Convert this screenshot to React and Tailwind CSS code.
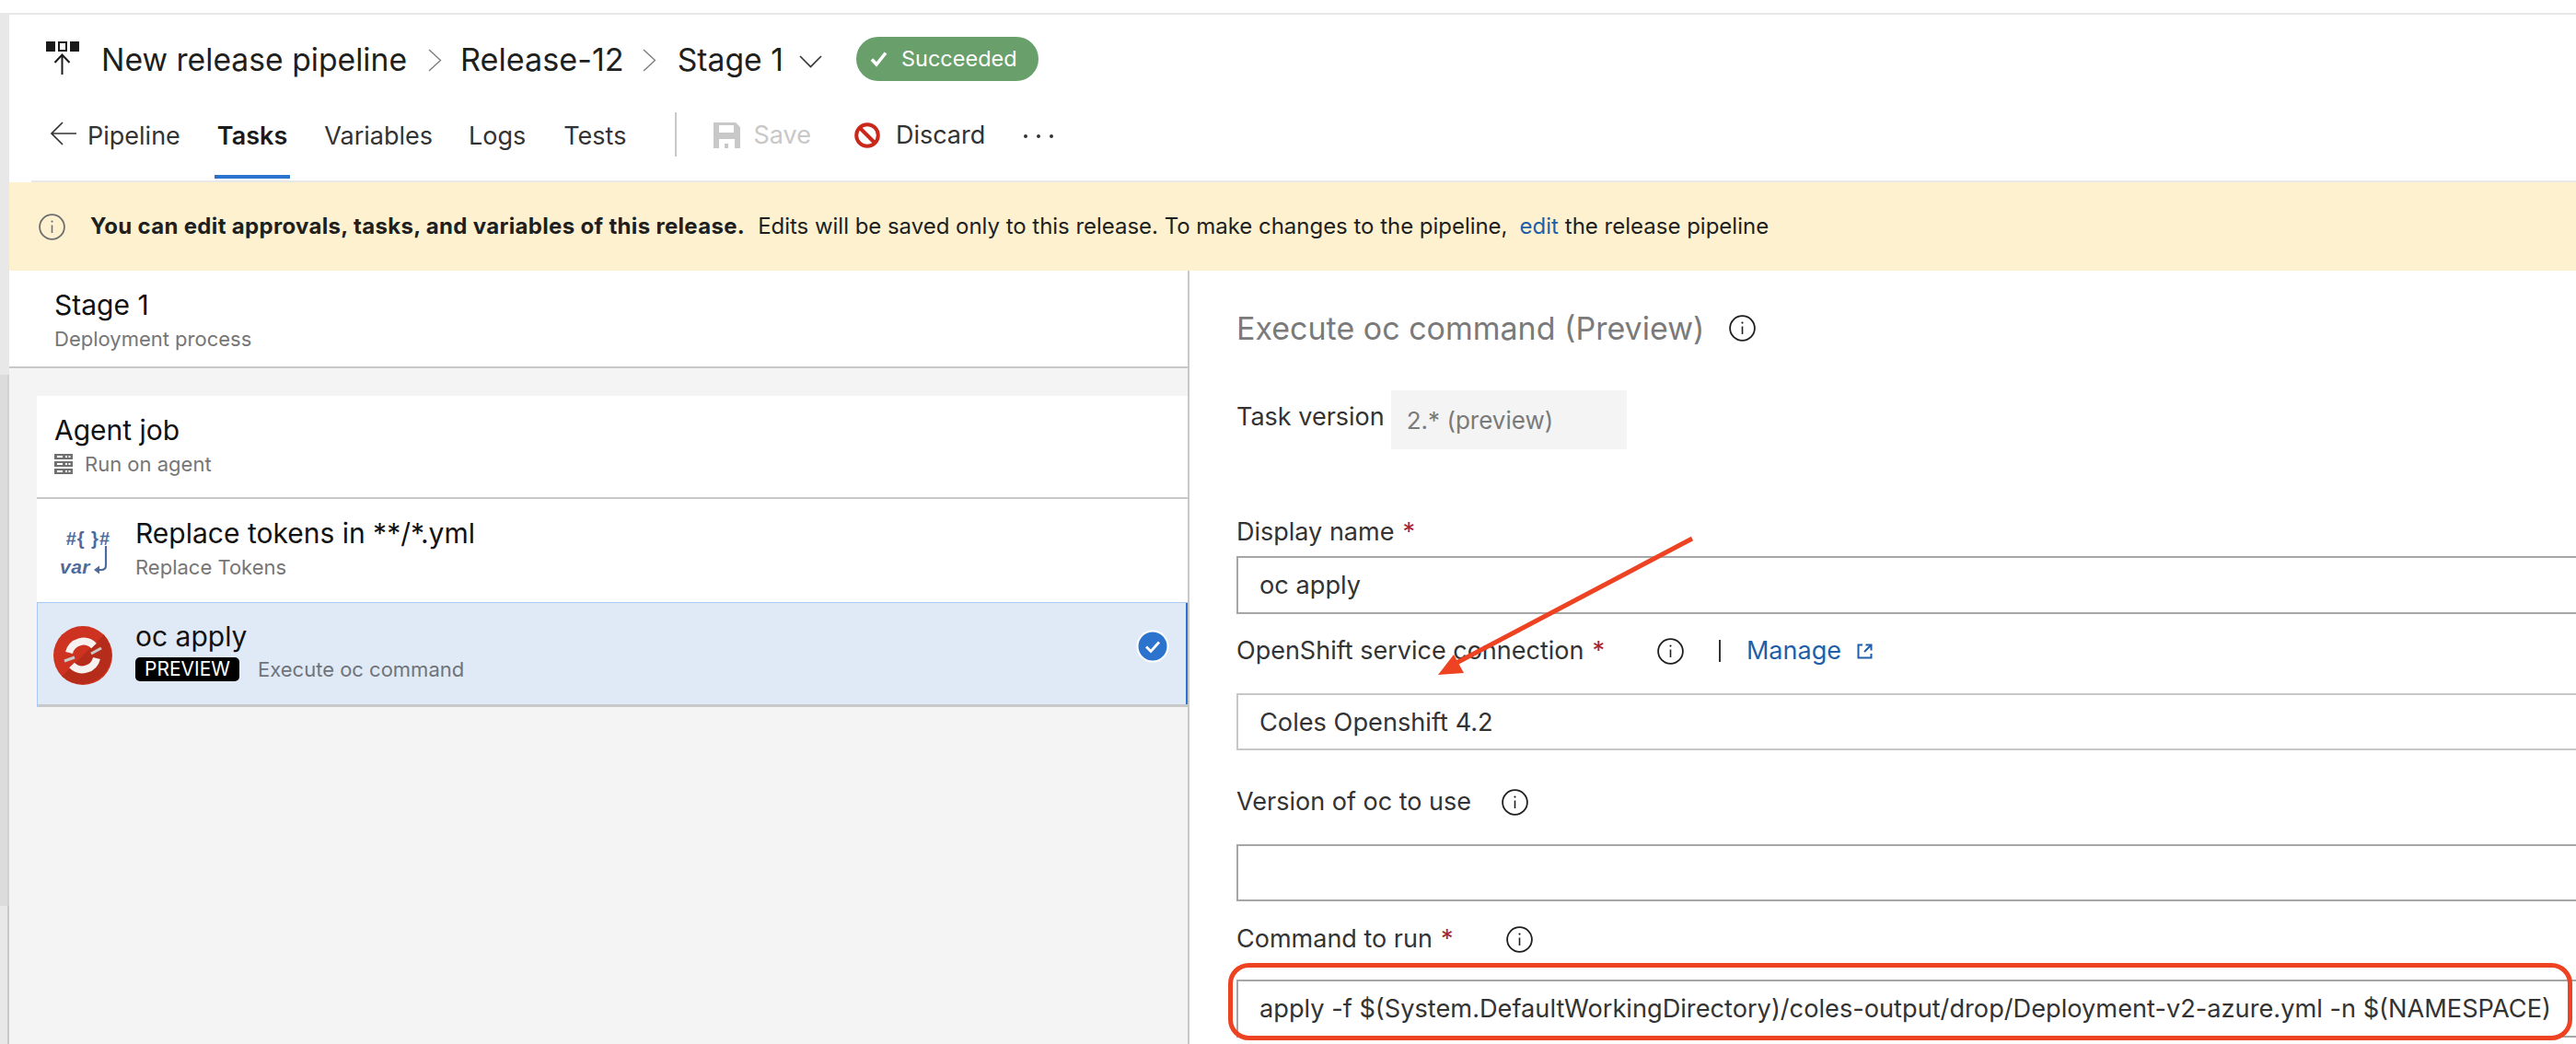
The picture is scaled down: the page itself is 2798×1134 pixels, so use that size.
const F = "font-['Inter','Noto_Sans',sans-serif]";

function Info({ className = "", color = "#1f1f1f" }) {
  return (
    <svg width="29" height="29" viewBox="0 0 29 29" className={`shrink-0 ${className}`} fill="none">
      <circle cx="14.5" cy="14.5" r="13.4" stroke={color} strokeWidth="1.8" />
      <circle cx="14.5" cy="8.6" r="1.1" fill={color} />
      <path d="M14.5 12.5V21" stroke={color} strokeWidth="1.6" />
    </svg>
  );
}

function Star() {
  return <span className="ml-[9px] text-[#a4262c]">*</span>;
}

function Label({ children, className = "" }) {
  return <div className={`h-[36px] flex items-center text-[27px] leading-[36px] text-[#333333] whitespace-nowrap ${className}`}>{children}</div>;
}

function Field({ children, h = "h-[62px]", border = "border-[#a6a6a6]", className = "" }) {
  return (
    <div className={`${h} ${border} border-2 border-r-0 flex items-center pl-[23px] pt-[2px] text-[27.2px] text-[#333333] whitespace-nowrap ${className}`}>
      {children}
    </div>
  );
}

function PipelineIcon() {
  return (
    <svg width="37" height="37" viewBox="0 0 37 37" className="shrink-0 mb-[3px]" fill="none">
      <rect x="0" y="0" width="10" height="11" fill="#1b1b1b" />
      <rect x="14" y="1" width="8" height="9" stroke="#1b1b1b" strokeWidth="2" />
      <rect x="26" y="0" width="10" height="11" fill="#1b1b1b" />
      <path d="M17.5 36V15M9.5 23l8-8.5 8 8.5" stroke="#1b1b1b" strokeWidth="2" />
    </svg>
  );
}

function Crumb() {
  return (
    <svg width="15" height="25" viewBox="0 0 15 25" fill="none" className="shrink-0">
      <path d="M1 1l12.5 11.5L1 24" stroke="#7f7f7f" strokeWidth="1.4" />
    </svg>
  );
}

function Tab({ children, active, className = "" }) {
  return (
    <div className={`h-[80px] pt-[18px] leading-[32px] border-b-4 px-[3px] ${active ? "border-[#2b73cc] font-semibold text-[#1b1b1b]" : "border-transparent text-[#333333]"} ${className}`}>
      {children}
    </div>
  );
}

function TokenIcon() {
  return (
    <div className="w-[58px] ml-[25px] mt-[33px] shrink-0 flex flex-col font-['Liberation_Sans',sans-serif] font-bold text-[#4d6a9c] leading-none">
      <span className="self-end mr-[3px] text-[20px] h-[20px] leading-[20px] tracking-[1px] whitespace-pre">#{"{ }"}#</span>
      <div className="flex items-end h-[32px]">
        <span className="text-[21px] italic leading-[22px] tracking-[0.5px]">var</span>
        <svg width="24" height="34" viewBox="0 0 24 34" fill="none" className="ml-[-1px] shrink-0">
          <path d="M18 0V21q0 5-5 5H9" stroke="#4d6a9c" strokeWidth="2.2" />
          <path d="M5 26l6-4.500v9z" fill="#4d6a9c" />
        </svg>
      </div>
    </div>
  );
}

function OpenShiftLogo() {
  return (
    <svg width="64" height="64" viewBox="0 0 64 64" className="shrink-0">
      <circle cx="32" cy="32" r="32" fill="#cd3320" />
      <path d="M54.600 9.400A32 32 0 0 1 9.400 54.600z" fill="#b62c1a" />
      <path d="M17 29A16 16 0 0 1 44 21.500M47 35A16 16 0 0 1 20 42.500" fill="none" stroke="#f7f1f0" strokeWidth="8" />
      <path d="M12 38l11-4M41 30l11-6" stroke="#c9c9c9" strokeWidth="3" />
    </svg>
  );
}

export default function App() {
  return (
    <div className={`w-[2798px] h-[1134px] overflow-hidden relative bg-white ${F}`}>
      <div className="h-[14px] bg-white" />
      <div className="h-[1120px] flex border-t-2 border-[#e8e8e8]">
        <div className="w-[10px] shrink-0 flex flex-col">
          <div className="h-[391px] bg-[#e8e8e8]" />
          <div className="h-[577px] bg-[#dcdcdc] border-r-2 border-[#d2d2d2]" />
          <div className="flex-1 bg-[#e8e8e8] border-r-2 border-[#c8c8c8]" />
        </div>
        <div className="flex-1 min-w-0 flex flex-col">
          <div className="h-[98px] flex items-center pl-[40px] text-[33.7px] text-[#201f1e] whitespace-nowrap">
            <PipelineIcon />
            <span className="ml-[23px]">New release pipeline</span>
            <div className="ml-[23px]"><Crumb /></div>
            <span className="ml-[20px] text-[34.2px]">Release-12</span>
            <div className="ml-[20px]"><Crumb /></div>
            <span className="ml-[23px]">Stage 1</span>
            <svg width="25" height="14" viewBox="0 0 25 14" fill="none" className="ml-[17px] mt-[4px]">
              <path d="M1 1l11.500 11.500L24 1" stroke="#333333" strokeWidth="1.6" />
            </svg>
            <div className="ml-[37px] h-[48px] w-[198px] mb-[2px] rounded-full bg-[#689f6a] flex items-center text-white text-[23.5px]">
              <svg width="19" height="18" viewBox="0 0 19 18" fill="none" className="ml-[15px]">
                <path d="M2 9.500l5 5.500L17 2.500" stroke="#ffffff" strokeWidth="3.600" />
              </svg>
              <span className="ml-[15px]">Succeeded</span>
            </div>
          </div>
          <div className="ml-[24px] h-[84px] border-b-2 border-[#e8e8e8] flex items-start text-[27px] whitespace-nowrap">
            <svg width="29" height="26" viewBox="0 0 29 26" fill="none" className="ml-[20px] mt-[18px]">
              <path d="M29 13H2M14 1L2 13l12 12" stroke="#333333" strokeWidth="1.700" />
            </svg>
            <Tab className="ml-[9px]">Pipeline</Tab>
            <Tab active className="ml-[34px]">Tasks</Tab>
            <Tab className="ml-[34px]">Variables</Tab>
            <Tab className="ml-[33px]">Logs</Tab>
            <Tab className="ml-[35px]">Tests</Tab>
            <div className="ml-[50px] mt-[8px] h-[48px] w-[2px] bg-[#c8c8c8]" />
            <div className="ml-[40px] mt-[19px] flex items-center h-[28px] text-[#c8c8c8]">
              <svg width="29" height="28" viewBox="0 0 29 28">
                <path fillRule="evenodd" d="M0 0h24l5 5v23H0zM6 3v8h16V3zM6 18v10h6v-5h4v5h7V18z" fill="#c8c8c8" />
              </svg>
              <span className="ml-[14px]">Save</span>
            </div>
            <div className="ml-[47px] mt-[19px] flex items-center h-[28px] text-[#333333]">
              <svg width="28" height="28" viewBox="0 0 28 28" fill="none">
                <circle cx="14" cy="14" r="11.800" stroke="#c9281a" strokeWidth="4" />
                <path d="M6 6l16 16" stroke="#c9281a" strokeWidth="4" />
              </svg>
              <span className="ml-[17px]">Discard</span>
            </div>
            <div className="ml-[42px] mt-[32px] flex gap-[10px]">
              <span className="w-[4px] h-[4px] rounded-full bg-[#333333]" />
              <span className="w-[4px] h-[4px] rounded-full bg-[#333333]" />
              <span className="w-[4px] h-[4px] rounded-full bg-[#333333]" />
            </div>
          </div>
          <div className="h-[96px] shrink-0 bg-[#fdf1d0] flex items-center pl-[32px] text-[24px] text-[#201f1e] whitespace-nowrap">
            <Info color="#6f6f6f" />
            <span className="ml-[27px] font-bold tracking-[0.32px]">You can edit approvals, tasks, and variables of this release.</span>
            <span className="ml-[14px] tracking-[-0.03px]">Edits will be saved only to this release. To make changes to the pipeline,</span>
            <span className="ml-[13px] text-[#1f5fa8]">edit</span>
            <span className="ml-[7px]">the release pipeline</span>
          </div>
          <div className="flex-1 min-h-0 flex">
            <div className="w-[1282px] shrink-0 border-r-2 border-[#c8c8c8] bg-[#f4f4f4] flex flex-col">
              <div className="h-[106px] bg-white border-b-2 border-[#c8c8c8] pl-[49px] pt-[17px]">
                <div className="h-[40px] leading-[40px] text-[30px] text-[#111111]">Stage 1</div>
                <div className="mt-[3px] h-[28px] leading-[28px] text-[22px] text-[#767676]">Deployment process</div>
              </div>
              <div className="ml-[30px] mt-[30px]">
                <div className="h-[112px] bg-white border-b-2 border-[#c8c8c8] pl-[19px] pt-[17px]">
                  <div className="h-[40px] leading-[40px] text-[30px] text-[#111111]">Agent job</div>
                  <div className="mt-[3px] h-[28px] flex items-center text-[22px] text-[#767676]">
                    <svg width="20" height="22" viewBox="0 0 20 22">
                      <path fillRule="evenodd" d="M0 0h20v6H0zM0 8h20v6H0zM0 16h20v6H0zM12 2v2h2V2zM15.500 2v2h2V2zM12 10v2h2v-2zM15.500 10v2h2v-2zM12 18v2h2v-2zM15.500 18v2h2v-2zM3 2v2h6V2zM3 10v2h6v-2zM3 18v2h6v-2z" fill="#707070" />
                    </svg>
                    <span className="ml-[13px]">Run on agent</span>
                  </div>
                </div>
                <div className="h-[112px] bg-white flex">
                  <TokenIcon />
                  <div className="ml-[24px] pt-[17px]">
                    <div className="h-[40px] leading-[40px] text-[30px] text-[#111111]">Replace tokens in **/*.yml</div>
                    <div className="mt-[3px] h-[28px] leading-[28px] text-[22px] text-[#767676]">Replace Tokens</div>
                  </div>
                </div>
                <div className="h-[114px] bg-[#e0eaf7] border border-[#a8c8f5] border-r-0 border-b-0 flex relative">
                  <div className="mt-[25px] ml-[17px]"><OpenShiftLogo /></div>
                  <div className="ml-[25px] pt-[16px]">
                    <div className="h-[40px] leading-[40px] text-[30px] text-[#111111]">oc apply</div>
                    <div className="mt-[3px] h-[26px] flex items-center">
                      <span className="w-[113px] h-[26px] rounded-[5px] bg-black text-white text-[21px] leading-[26px] text-center">PREVIEW</span>
                      <span className="ml-[20px] text-[22px] text-[#6f7479]">Execute oc command</span>
                    </div>
                  </div>
                  <svg width="36" height="36" viewBox="0 0 36 36" className="ml-auto mt-[29px] mr-[20px]">
                    <circle cx="18" cy="18" r="17.500" fill="#ffffff" />
                    <circle cx="18" cy="18" r="15.500" fill="#2b73cc" />
                    <path d="M11 18.500l5 5 9-10" stroke="#ffffff" strokeWidth="2.800" fill="none" />
                  </svg>
                  <div className="absolute right-0 top-0 bottom-[3px] w-[2px] bg-[#2b73cc]" />
                  <div className="absolute left-0 right-0 bottom-0 h-[3px] bg-[#c8c8c8]" />
                </div>
              </div>
            </div>
            <div className="flex-1 min-w-0 bg-white pl-[51px] pt-[42px]">
              <div className="h-[40px] flex items-center text-[34px] text-[#7a7a7a] whitespace-nowrap">
                Execute oc command (Preview)
                <Info className="ml-[27px]" />
              </div>
              <div className="mt-[48px] h-[64px] flex items-start">
                <Label className="mt-[11px]">Task version</Label>
                <div className="ml-[7px] w-[256px] h-[64px] bg-[#f4f4f4] flex items-center pl-[17px] text-[26px] text-[#7a7a7a]">2.* (preview)</div>
              </div>
              <Label className="mt-[72px]">Display name<Star /></Label>
              <Field h="h-[63px]" className="mt-[8px]">oc apply</Field>
              <Label className="mt-[22px]">
                OpenShift service connection<Star />
                <Info className="ml-[57px]" />
                <span className="ml-[38px] w-[2px] h-[24px] bg-[#333333]" />
                <span className="ml-[28px] text-[#1f5fa8]">Manage</span>
                <svg width="17" height="17" viewBox="0 0 17 17" fill="none" className="ml-[17px]">
                  <path d="M6 1.500H1.500v14h14V11M9.500 1.500h6v6M15.500 1.500L8 9" stroke="#1f5fa8" strokeWidth="2" />
                </svg>
              </Label>
              <Field border="border-[#c8c8c8]" className="mt-[28px]">Coles Openshift 4.2</Field>
              <Label className="mt-[38px]">
                Version of oc to use
                <Info className="ml-[33px]" />
              </Label>
              <Field className="mt-[28px]" />
              <Label className="mt-[23px]">
                Command to run<Star />
                <Info className="ml-[58px]" />
              </Label>
              <Field h="h-[63px]" className="mt-[26px]">apply -f $(System.DefaultWorkingDirectory)/coles-output/drop/Deployment-v2-azure.yml -n $(NAMESPACE)</Field>
            </div>
          </div>
        </div>
      </div>
      <svg width="2798" height="1134" viewBox="0 0 2798 1134" className="absolute left-0 top-0 pointer-events-none" fill="none">
        <path d="M1838 585L1582 720" stroke="#ee4323" strokeWidth="5" />
        <path d="M1562 733L1579 711L1590 731Z" fill="#ee4323" />
        <rect x="1336.500" y="1048.500" width="1455" height="79" rx="20" stroke="#ee4323" strokeWidth="5" />
      </svg>
    </div>
  );
}
